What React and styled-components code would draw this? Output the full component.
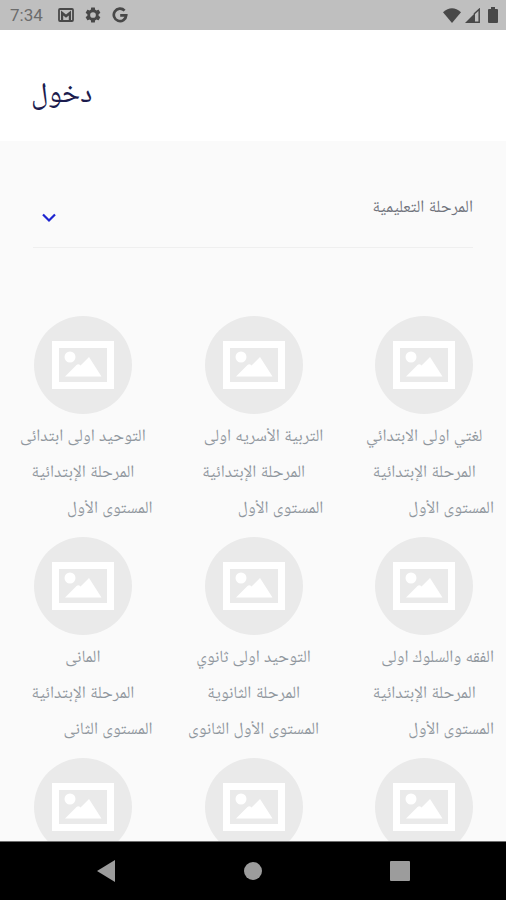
import React from "react";
import styled, { createGlobalStyle, ThemeProvider } from "styled-components";

const theme = {
  primary: "#1c1c4e",
  accent: "#1d24d0",
  label: "#70737c",
  text: "#90979e",
  background: "#fafafa",
  placeholder: "#eaeaea",
  fonts: `Roboto, "Noto Naskh Arabic UI", "Noto Naskh Arabic", "Noto Sans Arabic", "DejaVu Sans", sans-serif`
};

const GlobalStyle = createGlobalStyle`
  * {
    box-sizing: border-box;
  }

  body {
    margin: 0;
    background: ${theme.background};
    font-family: ${theme.fonts};
  }
`;

const Screen = styled.div`
  display: flex;
  flex-direction: column;
  height: 100vh;
`;

const StatusBar = styled.div`
  display: flex;
  align-items: center;
  justify-content: space-between;
  flex: none;
  height: 30px;
  padding: 0 8px 0 10px;
  background: #bfbfbf;
  color: #484848;
`;

const StatusGroup = styled.div`
  display: flex;
  align-items: center;
  gap: ${props => props.$gap}px;
`;

const Clock = styled.span`
  margin-right: 5px;
  font-size: 17px;
  line-height: 30px;
  color: #6c6c6c;
`;

const Header = styled.header`
  display: flex;
  align-items: center;
  flex: none;
  height: 111px;
  padding: 20px 31px 0;
  background: #fff;
`;

const Title = styled.h1`
  margin: 0;
  font-size: 29px;
  font-weight: 400;
  line-height: 40px;
  color: ${props => props.theme.primary};
`;

const Content = styled.main`
  flex: 1;
  min-height: 0;
  overflow: hidden;
`;

const Field = styled.div`
  display: grid;
  margin: 48px 33px 68px;
  border-bottom: 1px solid #efefef;
`;

const Select = styled.select`
  grid-area: 1 / 1;
  width: 100%;
  height: 58px;
  padding: 0 0 20px;
  border: 0;
  outline: 0;
  appearance: none;
  background: transparent;
  font-family: inherit;
  font-size: 17px;
  color: ${props => props.theme.label};
`;

const Arrow = styled.svg`
  grid-area: 1 / 1;
  justify-self: end;
  align-self: center;
  width: 16px;
  height: 10px;
  margin: 0 8px;
  pointer-events: none;
`;

const Grid = styled.ul`
  display: grid;
  grid-template-columns: repeat(3, 1fr);
  column-gap: 31px;
  row-gap: 10px;
  margin: 0;
  padding: 0 12px 0 13px;
  list-style: none;
`;

const Card = styled.li`
  display: flex;
  flex-direction: column;
  align-items: center;
  min-width: 0;
`;

const Placeholder = styled.svg`
  width: 98px;
  height: 98px;
  margin-bottom: 5px;
`;

const Line = styled.p`
  align-self: ${props => (props.$start ? "flex-start" : "center")};
  margin: 0;
  font-size: 17px;
  line-height: 36px;
  white-space: nowrap;
  color: ${props => props.theme.text};
`;

const NavBar = styled.nav`
  display: flex;
  flex: none;
  height: 59px;
  padding: 0 33px;
  border-top: 1px solid #6e6e6e;
  background: #000;
`;

const NavButton = styled.button`
  display: flex;
  flex: 1;
  align-items: center;
  justify-content: center;
  padding: 0;
  border: 0;
  background: none;
  color: #9c9c9c;
`;

const courses = [
  { name: "لغتي اولى الابتدائي", stage: "المرحلة الإبتدائية", level: "المستوى الأول" },
  { name: "التربية الأسريه اولى", stage: "المرحلة الإبتدائية", level: "المستوى الأول", wideName: true },
  { name: "التوحيد اولى ابتدائى", stage: "المرحلة الإبتدائية", level: "المستوى الأول" },
  { name: "الفقه والسلوك اولى", stage: "المرحلة الإبتدائية", level: "المستوى الأول", wideName: true },
  { name: "التوحيد اولى ثانوي", stage: "المرحلة الثانوية", level: "المستوى الأول الثانوى", centerLevel: true },
  { name: "المانى", stage: "المرحلة الإبتدائية", level: "المستوى الثانى" },
  {},
  {},
  {}
];

const MailIcon = () => (
  <svg width="16" height="14" viewBox="0 0 16 14">
    <rect x="1" y="1" width="14" height="12" rx="1" fill="none" stroke="currentColor" strokeWidth="1.800" />
    <path d="M3 12V2.500l5 4 5-4V12h-2.200V7.500L8 9.800 5.200 7.500V12z" fill="currentColor" />
  </svg>
);

const GearIcon = () => (
  <svg width="18" height="18" viewBox="0 0 24 24" fill="currentColor">
    <path d="M19.430 12.980c.04-.32.07-.64.07-.98s-.03-.66-.07-.98l2.110-1.650c.19-.15.24-.42.12-.64l-2-3.460c-.12-.22-.39-.3-.61-.22l-2.490 1c-.52-.4-1.080-.73-1.690-.98l-.38-2.650C14.460 2.180 14.250 2 14 2h-4c-.25 0-.46.18-.49.42l-.38 2.650c-.61.25-1.170.59-1.690.98l-2.490-1c-.23-.09-.49 0-.61.22l-2 3.460c-.13.22-.07.49.12.64l2.110 1.650c-.04.32-.07.65-.07.98s.03.66.07.98l-2.110 1.650c-.19.15-.24.42-.12.64l2 3.460c.12.22.39.3.61.22l2.490-1c.52.4 1.080.73 1.690.98l.38 2.650c.03.24.24.42.49.42h4c.25 0 .46-.18.49-.42l.38-2.650c.61-.25 1.170-.59 1.690-.98l2.490 1c.23.09.49 0 .61-.22l2-3.460c.12-.22.07-.49-.12-.64zM12 15.800a3.800 3.800 0 1 1 0-7.600 3.800 3.800 0 0 1 0 7.600z" />
  </svg>
);

const GoogleIcon = () => (
  <svg width="16" height="16" viewBox="0 0 16 16">
    <path
      d="M12.600 3.700A6.200 6.200 0 1 0 14.200 8.300H8.200"
      fill="none"
      stroke="currentColor"
      strokeWidth="2.700"
    />
  </svg>
);

const WifiIcon = () => (
  <svg width="18" height="15" viewBox="0 0 18 15" fill="currentColor">
    <path d="M0 4.200Q9-3.800 18 4.200L9 15z" />
  </svg>
);

const SignalIcon = () => (
  <svg width="15" height="15" viewBox="0 0 15 15">
    <path d="M0 15L10 5V15z" fill="currentColor" />
    <path d="M9 6L14.200 1.300v13H9" fill="none" stroke="currentColor" strokeWidth="1.500" />
  </svg>
);

const BatteryIcon = () => (
  <svg width="10" height="16" viewBox="0 0 10 16" fill="currentColor">
    <path d="M3 0h4v2h2q1 0 1 1v12q0 1-1 1H1q-1 0-1-1V3q0-1 1-1h2z" />
  </svg>
);

const PlaceholderImage = () => (
  <Placeholder viewBox="0 0 98 98" aria-hidden="true">
    <circle cx="49" cy="49" r="49" fill={theme.placeholder} />
    <rect x="21.500" y="28.500" width="55" height="41" fill="none" stroke="#fff" strokeWidth="7" />
    <circle cx="36" cy="41" r="5.500" fill="#fff" />
    <path d="M31 60.500L42.500 49q2-1.500 4 0.500L55 41L67.500 60.500z" fill="#fff" />
  </Placeholder>
);

const App = () => (
  <ThemeProvider theme={theme}>
    <GlobalStyle />
    <Screen>
      <StatusBar>
        <StatusGroup $gap={10}>
          <Clock>7:34</Clock>
          <MailIcon />
          <GearIcon />
          <GoogleIcon />
        </StatusGroup>
        <StatusGroup $gap={4}>
          <WifiIcon />
          <SignalIcon />
          <span />
          <BatteryIcon />
        </StatusGroup>
      </StatusBar>
      <Header>
        <Title lang="ar">دخول</Title>
      </Header>
      <Content dir="rtl" lang="ar">
        <Field>
          <Select aria-label="المرحلة التعليمية">
            <option>المرحلة التعليمية</option>
          </Select>
          <Arrow viewBox="0 0 16 10">
            <path d="M2 1.500L8 7.500L14 1.500" fill="none" stroke={theme.accent} strokeWidth="2.200" />
          </Arrow>
        </Field>
        <Grid>
          {courses.map(({ name, stage, level, wideName, centerLevel }, index) => (
            <Card key={index}>
              <PlaceholderImage />
              {name && <Line $start={wideName}>{name}</Line>}
              {stage && <Line>{stage}</Line>}
              {level && <Line $start={!centerLevel}>{level}</Line>}
            </Card>
          ))}
        </Grid>
      </Content>
      <NavBar>
        <NavButton aria-label="رجوع">
          <svg width="18" height="22" viewBox="0 0 18 22" fill="currentColor">
            <path d="M18 0v22L0 11z" />
          </svg>
        </NavButton>
        <NavButton aria-label="الرئيسية">
          <svg width="18" height="18" viewBox="0 0 18 18" fill="currentColor">
            <circle cx="9" cy="9" r="9" />
          </svg>
        </NavButton>
        <NavButton aria-label="التطبيقات">
          <svg width="20" height="20" viewBox="0 0 20 20" fill="currentColor">
            <rect width="20" height="20" rx="1" />
          </svg>
        </NavButton>
      </NavBar>
    </Screen>
  </ThemeProvider>
);

export default App;
